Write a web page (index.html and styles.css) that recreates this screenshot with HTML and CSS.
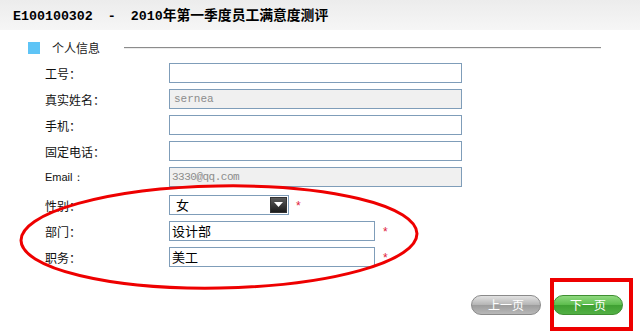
FILE: index.html
```html
<!DOCTYPE html>
<html>
  <head>
    <meta charset="utf-8" />
    <title>2010年第一季度员工满意度测评</title>
    <link rel="stylesheet" href="styles.css">
  </head>
  <body>
    <div class="title-bar">
      <span class="code">E100100302 - 2010</span><span class="cn">年第一季度员工满意度测评</span>
    </div>

    <div class="form">
      <div class="section-head">
        <span class="square"></span>
        <span class="section-name">个人信息</span>
        <span class="rule"></span>
      </div>

      <div class="row">
        <span class="label">工号：</span>
        <span class="field wide"></span>
      </div>
      <div class="row">
        <span class="label">真实姓名：</span>
        <span class="field wide readonly mono">sernea</span>
      </div>
      <div class="row">
        <span class="label">手机：</span>
        <span class="field wide"></span>
      </div>
      <div class="row">
        <span class="label">固定电话：</span>
        <span class="field wide"></span>
      </div>
      <div class="row">
        <span class="label latin">Email：</span>
        <span class="field wide readonly mail">3330@qq.com</span>
      </div>

      <div class="row gap-top">
        <span class="label">性别：</span>
        <span class="field select">
          <span class="select-text">女</span>
          <span class="select-btn">
            <svg width="9" height="6" viewBox="0 0 9 6"><path d="M0 0h9L4.5 5z" fill="#fff"/></svg>
          </span>
        </span>
        <span class="req first">*</span>
      </div>
      <div class="row">
        <span class="label">部门：</span>
        <span class="field mid">设计部</span>
        <span class="req">*</span>
      </div>
      <div class="row">
        <span class="label">职务：</span>
        <span class="field mid">美工</span>
        <span class="req">*</span>
      </div>
    </div>

    <div class="actions">
      <button class="pill prev">上一页</button>
      <button class="pill next">下一页</button>
    </div>

    <!-- hand-drawn markup over the screenshot -->
    <svg class="marks" width="640" height="336" viewBox="0 0 640 336">
      <ellipse cx="219" cy="237" rx="198" ry="51" fill="none" stroke="#ee0000" stroke-width="3" transform="rotate(-1 219 237)"/>
      <rect x="552" y="280" width="79" height="49" fill="none" stroke="#ee0000" stroke-width="4"/>
    </svg>
  </body>
</html>
```

FILE: styles.css
```css
body {
  margin: 0;
  width: 640px;
  height: 336px;
  position: relative;
  overflow: hidden;
  background: #ffffff;
  font-family: "Noto Sans CJK SC", sans-serif;
  font-size: 12px;
  color: #000000;
}

.title-bar {
  height: 30px;
  line-height: 29px;
  padding-left: 13px;
  background: linear-gradient(#ececec, #f6f6f6);
  white-space: nowrap;
}

.title-bar .code {
  font-family: "Liberation Mono", monospace;
  font-weight: bold;
  font-size: 13.3px;
  word-spacing: 7px;
}

.title-bar .cn {
  font-family: "Noto Sans CJK SC", sans-serif;
  font-weight: bold;
  font-size: 13.8px;
}

.form {
  padding-top: 12px;
}

.section-head {
  display: flex;
  align-items: center;
  height: 12px;
  padding-left: 28px;
}

.square {
  width: 12px;
  height: 12px;
  background: #5ec4f6;
}

.section-name {
  margin-left: 12px;
  line-height: 12px;
  color: #222222;
}

.rule {
  width: 477px;
  margin-left: 24px;
  border-top: 1px solid #8c8c8c;
  border-bottom: 1px solid #ececec;
}

.row {
  display: flex;
  align-items: center;
  height: 20px;
  margin-top: 6px;
}

.section-head + .row {
  margin-top: 9px;
}

.row.gap-top {
  margin-top: 8px;
}

.label {
  width: 124px;
  padding-left: 45px;
  flex: none;
  color: #111111;
}

.label.latin {
  font-family: "Liberation Sans", sans-serif;
  font-size: 11px;
}

.field {
  box-sizing: border-box;
  height: 20px;
  border: 1px solid #7f9db9;
  background: #ffffff;
  padding-left: 4px;
  line-height: 18px;
  white-space: nowrap;
  overflow: hidden;
}

.field.wide {
  width: 293px;
}

.field.mid {
  width: 206px;
  padding-left: 2px;
  font-size: 13px;
}

.field.readonly {
  background: #f0f0f0;
  color: #8c8c8c;
}

.field.mono {
  font-family: "Liberation Mono", monospace;
  font-size: 11px;
}

.field.mail {
  font-family: "Liberation Mono", monospace;
  font-size: 11px;
  letter-spacing: -0.5px;
  padding-left: 2px;
}

.field.select {
  width: 120px;
  display: flex;
  align-items: center;
  justify-content: space-between;
  padding: 0 1px 0 6px;
  font-size: 13px;
}

.select-btn {
  width: 17px;
  height: 16px;
  background: linear-gradient(#5a5a5a, #1c1c1c);
  border: 1px solid #333333;
  box-sizing: border-box;
  display: flex;
  align-items: center;
  justify-content: center;
}

.req {
  margin-left: 8px;
  color: #e0203a;
  font-family: "Liberation Sans", sans-serif;
  font-size: 12px;
  line-height: 12px;
  padding-top: 2px;
}

.req.first {
  margin-left: 7px;
}

.actions {
  display: flex;
  justify-content: flex-end;
  gap: 12px;
  padding-right: 17px;
  margin-top: 28px;
}

.pill {
  width: 70px;
  height: 20px;
  border-radius: 10px;
  padding: 0;
  font-family: "Noto Sans CJK SC", sans-serif;
  font-size: 12px;
  line-height: 18px;
  color: #ffffff;
  cursor: pointer;
}

.pill.prev {
  border: 1px solid #8a8a8a;
  background: linear-gradient(#e2e2e2, #b4b4b4 50%, #9c9c9c 51%, #b8b8b8);
}

.pill.next {
  border: 1px solid #3f8f32;
  background: linear-gradient(#8fd97f, #5cbc4c 50%, #3fa032 51%, #52b044);
}

.marks {
  position: absolute;
  top: 0;
  left: 0;
  pointer-events: none;
}
```
